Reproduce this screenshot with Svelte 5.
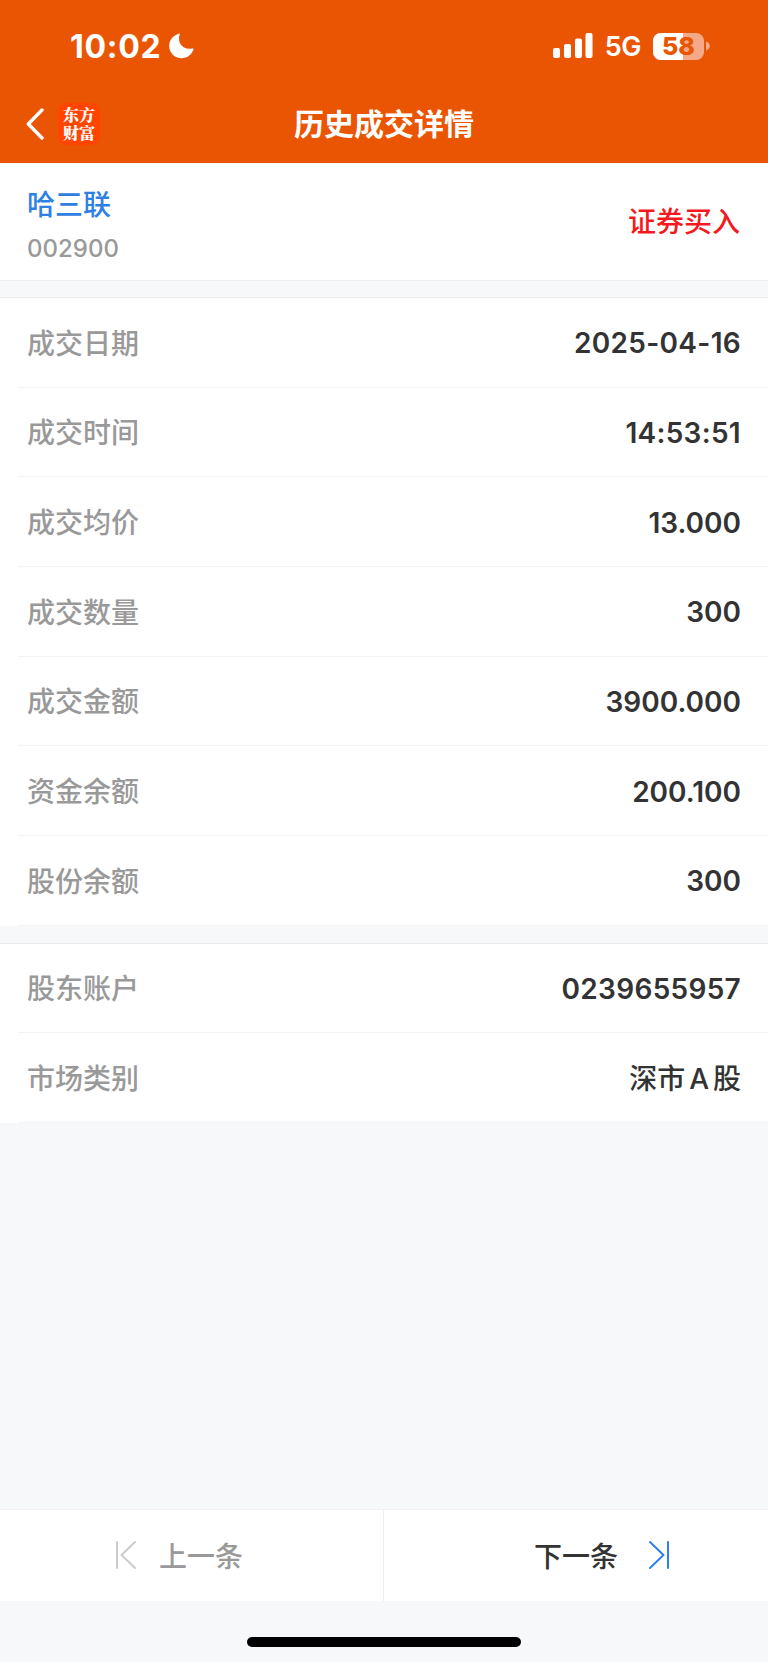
<script>
  const trade = { name: '哈三联', code: '002900', type: '证券买入' };

  const groups = [
    [
      { label: '成交日期', value: '2025-04-16', wide: true },
      { label: '成交时间', value: '14:53:51', wide: true },
      { label: '成交均价', value: '13.000' },
      { label: '成交数量', value: '300' },
      { label: '成交金额', value: '3900.000' },
      { label: '资金余额', value: '200.100' },
      { label: '股份余额', value: '300' }
    ],
    [
      { label: '股东账户', value: '0239655957', wide: true },
      { label: '市场类别', value: '深市 A 股', text: true }
    ]
  ];

  const battery = 58;
</script>

<main class="page">
  <header class="header">
    <div class="status-bar">
      <div class="status-left">
        <span class="time">10:02</span>
        <svg class="moon" width="25" height="26" viewBox="0 0 25 26">
          <path d="M9.5 .8C10.4 .2 11 .8 10.6 1.8C8.2 9.2 13.2 17.4 23.2 15.6C24.4 15.4 24.8 16 24.3 17C22.3 22 18 25.2 12.6 25.2C5.6 25.2 .2 19.8 .2 13C.2 7.6 3.6 2.8 9.5 .8Z" fill="#fff" />
        </svg>
      </div>
      <div class="status-right">
        <svg class="signal" width="40" height="26" viewBox="0 0 40 26" fill="#fff">
          <rect x="0" y="15" width="7" height="10" rx="2" />
          <rect x="11" y="11" width="7" height="14" rx="2" />
          <rect x="22" y="5.5" width="7" height="19.5" rx="2" />
          <rect x="32.5" y="0" width="7" height="25" rx="2" />
        </svg>
        <span class="network">5G</span>
        <div class="battery">
          <div class="battery-fill" style="width:{battery}%"></div>
          <span class="battery-text">{battery}</span>
        </div>
        <svg class="battery-nub" width="4" height="10" viewBox="0 0 4 10">
          <path d="M0 0.5C5 2 5 8 0 9.5Z" fill="#f6a987" />
        </svg>
      </div>
    </div>
    <nav class="nav-bar">
      <div class="nav-side">
        <svg class="back" width="18" height="32" viewBox="0 0 18 32" fill="none" stroke="#fff" stroke-width="3.4" stroke-linecap="round" stroke-linejoin="round">
          <path d="M16 2L2.3 16L16 30" />
        </svg>
        <div class="logo"><span>东方财富</span></div>
      </div>
      <h1>历史成交详情</h1>
      <div class="nav-side"></div>
    </nav>
  </header>

  <section class="summary">
    <div class="stock">
      <div class="stock-name">{trade.name}</div>
      <div class="stock-code">{trade.code}</div>
    </div>
    <div class="trade-type">{trade.type}</div>
  </section>

  {#each groups as rows}
    <section class="group">
      {#each rows as row}
        <div class="row">
          <span class="label">{row.label}</span>
          <span class="value" class:wide={row.wide} class:text={row.text}>{row.value}</span>
        </div>
      {/each}
    </section>
  {/each}

  <footer class="footer">
    <div class="pager">
      <button class="prev" disabled>
        <svg width="22" height="30" viewBox="0 0 22 30" fill="none" stroke="#ccc" stroke-width="2" stroke-linecap="round" stroke-linejoin="round">
          <path d="M2 2V28M20 2L6.5 15L20 28" />
        </svg>
        <span>上一条</span>
      </button>
      <button class="next">
        <span>下一条</span>
        <svg width="22" height="30" viewBox="0 0 22 30" fill="none" stroke="#2f80ed" stroke-width="2" stroke-linecap="round" stroke-linejoin="round">
          <path d="M20 2V28M2 2L15.5 15L2 28" />
        </svg>
      </button>
    </div>
    <div class="home-indicator"></div>
  </footer>
</main>

<style>
  :global(body) { margin:0; background:#f7f8fa; }
  .page { display:flex; flex-direction:column; width:768px; height:1662px; background:#f7f8fa; color:#333; font-family:Inter,"Noto Sans CJK SC",sans-serif; overflow:hidden; }
  .header { height:163px; background:#ea5503; color:#fff; flex:none; }
  .status-bar { display:flex; justify-content:space-between; height:90px; padding:2px 58px 0 70px; box-sizing:border-box; }
  .status-left, .status-right { display:flex; align-items:center; }
  .time { padding-top:1px; font-size:32px; font-weight:700; line-height:40px; letter-spacing:.7px; }
  .moon { margin-left:8px; }
  .network { margin-left:12px; padding-top:2px; font-size:27px; font-weight:600; line-height:40px; letter-spacing:-.5px; }
  .battery { position:relative; width:51px; height:27px; margin-left:12px; border-radius:8px; background:#f6a987; overflow:hidden; }
  .battery-fill { height:100%; background:#fff; }
  .battery-text { position:absolute; inset:0; color:#ea5503; font-size:25px; font-weight:800; line-height:27px; text-align:center; }
  .battery-nub { margin-left:2px; }
  .nav-bar { display:flex; align-items:center; height:68px; }
  .nav-side { display:flex; align-items:center; flex:1; }
  .back { margin-left:26px; }
  .logo { display:flex; align-items:center; justify-content:center; width:42px; height:42px; margin-left:14px; border-radius:9px; background:#ff4500; }
  .logo span { width:32px; font-family:"Noto Serif CJK SC","Noto Sans CJK SC",serif; font-size:16px; font-weight:900; line-height:18px; word-break:break-all; }
  h1 { margin:0; font-size:30px; font-weight:700; line-height:44px; }
  .summary { display:flex; align-items:center; justify-content:space-between; height:118px; padding:0 28px 0 27px; box-sizing:border-box; background:#fff; border-bottom:1px solid #eff0f2; flex:none; }
  .stock { padding-top:10px; }
  .stock-name { color:#2f80e3; font-size:28px; font-weight:500; line-height:44px; }
  .stock-code { color:#999; font-size:24px; font-weight:500; line-height:44px; }
  .trade-type { padding-bottom:3px; color:#f5191d; font-size:28px; font-weight:500; }
  .group { margin-top:16px; background:#fff; border-top:1px solid #ebecf0; flex:none; }
  .group + .group { margin-top:17px; }
  .row { display:flex; align-items:center; justify-content:space-between; height:89.67px; margin-left:18px; padding:0 27px 0 9px; box-sizing:border-box; border-bottom:1px solid #f4f4f5; }
  .label { padding-bottom:1px; color:#999; font-size:28px; font-weight:500; }
  .value { padding-top:2px; font-size:28px; font-weight:600; }
  .value.wide { letter-spacing:.3px; }
  .value.text { padding:0 0 1px; font-weight:500; word-spacing:-3.5px; }
  .footer { margin-top:auto; height:153px; flex:none; }
  .pager { display:flex; height:92px; box-sizing:border-box; background:#fff; border-top:1px solid #f3f1f3; }
  .pager button { display:flex; align-items:center; width:50%; padding:0 0 2px; border:0; box-sizing:border-box; background:none; color:#333; font-family:inherit; font-size:28px; font-weight:500; }
  .pager .prev { padding-left:115px; gap:22px; color:#999; border-right:1px solid #eee; }
  .pager .next { justify-content:flex-end; padding-right:98px; gap:30px; }
  .home-indicator { width:274px; height:10px; margin:36px auto 0; border-radius:5px; background:#000; }
</style>
